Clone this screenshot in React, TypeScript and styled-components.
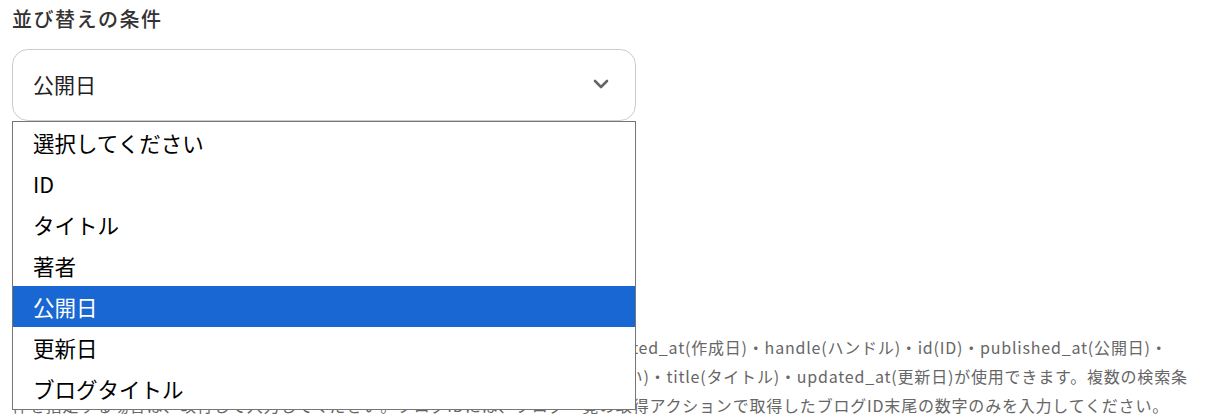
import styled, { createGlobalStyle } from 'styled-components';

const GlobalStyle = createGlobalStyle`
  body {
    margin: 0;
    background: #fff;
    font-family: "Noto Sans CJK JP", "Noto Sans", sans-serif;
  }
`;

const Page = styled.div`
  padding: 4px 12px 0 12px;
  height: 417px;
  overflow: hidden;
  box-sizing: border-box;
`;

const Label = styled.div`
  font-size: 20px;
  line-height: 30px;
  font-weight: 500;
  letter-spacing: 1.5px;
  color: #333;
  margin-bottom: 15px;
`;

const Field = styled.div`
  position: relative;
  width: 624px;
`;

const SelectBox = styled.div`
  height: 72px;
  box-sizing: border-box;
  border: 1px solid #ccc;
  border-radius: 16px;
  display: flex;
  align-items: center;
  justify-content: space-between;
  padding: 0 26px 2px 20px;
  font-size: 21px;
  color: #222;
`;

const Menu = styled.ul`
  position: absolute;
  top: 72px;
  left: 0;
  width: 624px;
  box-sizing: border-box;
  margin: 0;
  padding: 0;
  list-style: none;
  background: #fff;
  border: 1px solid #767676;
  z-index: 10;
`;

const Option = styled.li<{ $selected?: boolean }>`
  height: 41px;
  display: flex;
  align-items: center;
  padding-left: 20px;
  font-size: 21.5px;
  color: ${(p) => (p.$selected ? '#fff' : '#000')};
  background: ${(p) => (p.$selected ? '#1967d2' : 'transparent')};
`;

const Section = styled.div`
  margin-top: 24px;
`;

const Input = styled.div`
  height: 72px;
  box-sizing: border-box;
  border: 1px solid #ccc;
  border-radius: 16px;
  width: 624px;
  margin-bottom: 71px;
`;

const Hint = styled.p`
  margin: 0;
  font-family: "Noto Sans CJK JP", sans-serif;
  font-size: 16px;
  line-height: 29px;
  letter-spacing: 0.8px;
  color: #666;
`;

const HintLine = styled.span`
  display: block;
  white-space: nowrap;
`;

const options = ['選択してください', 'ID', 'タイトル', '著者', '公開日', '更新日', 'ブログタイトル'];

const Chevron = () => (
  <svg width="16" height="10" viewBox="0 0 16 10">
    <polyline points="2,2 8,8 14,2" fill="none" stroke="#666" strokeWidth="2.6" strokeLinecap="round" strokeLinejoin="round" />
  </svg>
);

const App = () => {
  return (
    <Page>
      <GlobalStyle />
      <Label>並び替えの条件</Label>
      <Field>
        <SelectBox>
          <span>公開日</span>
          <Chevron />
        </SelectBox>
        <Menu>
          {options.map((o) => (
            <Option key={o} $selected={o === '公開日'}>{o}</Option>
          ))}
        </Menu>
      </Field>
      <Section>
        <Label>検索条件</Label>
        <Input />
        <Hint>
          <HintLine>ブログを並び替える際の条件として指定できる値は、以下の項目の通りです。created_at(作成日)・handle(ハンドル)・id(ID)・published_at(公開日)・</HintLine>
          <HintLine>author(著者)・blog_title(ブログタイトル)・relevance(検索語句との関連度が高い)・title(タイトル)・updated_at(更新日)が使用できます。複数の検索条</HintLine>
          <HintLine>件を指定する場合は、改行して入力してください。ブログIDには、ブログ一覧の取得アクションで取得したブログID末尾の数字のみを入力してください。</HintLine>
        </Hint>
      </Section>
    </Page>
  );
};

export default App;
